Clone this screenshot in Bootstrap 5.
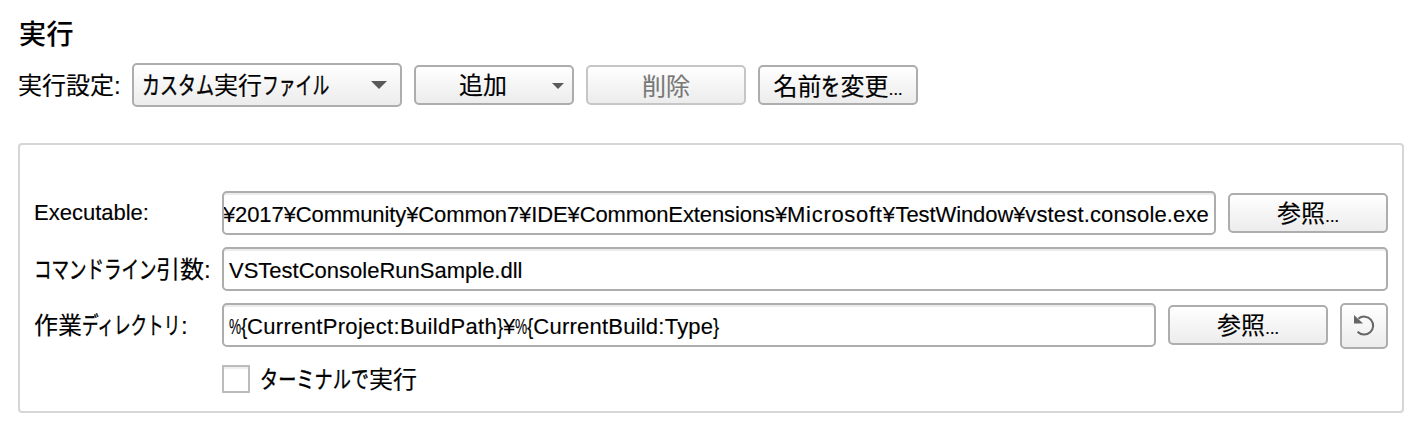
<!DOCTYPE html>
<html lang="ja">
<head>
<meta charset="utf-8">
<title>実行</title>
<link href="https://cdn.jsdelivr.net/npm/bootstrap@5.3.0/dist/css/bootstrap.min.css" rel="stylesheet">
<style>
body{background:#fff;color:#000;font:24px/30px "Liberation Sans","Noto Sans CJK JP",sans-serif;white-space:nowrap;-webkit-text-stroke:.15px}
.page{padding:18px 13px 0 18px}
h1{font:500 27px/30px "Noto Sans CJK JP",sans-serif;letter-spacing:.5px;margin:0;padding-left:1px}
.toolbar{height:44px;margin-top:15px;gap:12px}
.toolbar>.lbl{width:102px;padding-top:2px}
.lbl{flex-shrink:0}
.kana{display:inline-block;transform-origin:0 50%;font-family:"Noto Sans CJK JP",sans-serif;-webkit-text-stroke:.4px}
.k-custom{width:72px;transform:scaleX(.75)}
.k-file{width:67px;transform:scaleX(.7)}
.k-cmd{width:122px;transform:scaleX(.73)}
.k-dir{width:99px;transform:scaleX(.69)}
.k-term{width:109px;transform:scaleX(.757)}
.k-wo{width:19px;transform:scaleX(.8)}
.ui-btn{flex-shrink:0;width:160px;height:40px;border:2px solid #adadad;border-radius:5px;background:linear-gradient(#fff,#ececec);padding:3px 0 0;font-size:24px;line-height:30px;color:#000}
.ui-btn:disabled{border-color:#c6c6c6;color:#777;opacity:1}
.combo{width:270px;height:44px;padding:0 13px 0 8px}
.dots{font-family:"Liberation Sans",sans-serif;font-size:18px;letter-spacing:-.3px}
.add-btn{padding:2px 8px 0 43px}
.panel{border:2px solid #d6d6d6;border-radius:4px;height:270px;margin-top:36px;padding:46px 14px 0}
.fieldrow{height:44px;margin-bottom:12px;gap:12px}
.fieldrow>.lbl{width:176px}
.field{height:44px;min-width:0;border:2px solid #adadad;border-radius:5px;box-shadow:inset 0 2px #ececec;padding:7px 5px 0;overflow:hidden}
.lat{font-size:22px}
.t-path{letter-spacing:-.1px}
.t-ms{letter-spacing:.7px}
.t-win{letter-spacing:-.1px}
.t-exe{letter-spacing:.15px}
.t-var{letter-spacing:.33px}
.t-type{letter-spacing:.23px}
.pct{display:inline-block;width:12px;transform:scaleX(.62);transform-origin:0 50%}
.brace{display:inline-block;width:6px;transform:scaleX(.85);transform-origin:0 50%}
.box{width:28px;height:28px;border:2px solid #bcbcbc;box-shadow:inset 0 2px #eee}
.reset{width:48px;height:46px;padding:0}
.checkrow{padding-left:188px;gap:10px;height:30px;margin-top:17px}
</style>
</head>
<body>
<main class="page">
<h1>実行</h1>
<div class="toolbar d-flex align-items-center">
 <span class="lbl">実行設定:</span>
 <button class="btn ui-btn combo d-flex align-items-center"><span><span class="kana k-custom">カスタム</span>実行<span class="kana k-file">ファイル</span></span><svg class="ms-auto" width="16" height="8"><path d="M0 0H16L8 8Z" fill="#5a5a5a"/></svg></button>
 <button class="btn ui-btn add-btn d-flex align-items-center justify-content-between">追加<svg width="12" height="6"><path d="M0 0H12L6 6Z" fill="#5a5a5a"/></svg></button>
 <button class="btn ui-btn" disabled>削除</button>
 <button class="btn ui-btn">名前<span class="kana k-wo">を</span>変更<span class="dots">...</span></button>
</div>
<section class="panel">
 <div class="fieldrow d-flex align-items-center">
  <span class="lbl lat">Executable:</span>
  <div class="field lat flex-grow-1 d-flex justify-content-end"><span class="t-path">¥2017¥Community¥Common7¥IDE¥CommonExtensions¥</span><span class="t-ms">Microsoft¥</span><span class="t-win">TestWindow¥</span><span class="t-exe">vstest.console.exe</span></div>
  <button class="btn ui-btn">参照<span class="dots">...</span></button>
 </div>
 <div class="fieldrow d-flex align-items-center">
  <span class="lbl"><span class="kana k-cmd">コマンドライン</span>引数:</span>
  <div class="field lat flex-grow-1">VSTestConsoleRunSample.dll</div>
 </div>
 <div class="fieldrow d-flex align-items-center">
  <span class="lbl">作業<span class="kana k-dir">ディレクトリ</span>:</span>
  <div class="field lat flex-grow-1"><span class="pct">%</span><span class="brace">{</span><span class="t-var">CurrentProject:BuildPath</span><span class="brace">}</span>¥<span class="pct">%</span><span class="brace">{</span><span class="t-type">CurrentBuild:Type</span><span class="brace">}</span></div>
  <button class="btn ui-btn">参照<span class="dots">...</span></button>
  <button class="btn ui-btn reset align-self-start d-flex align-items-center justify-content-center" aria-label="Reset"><svg width="22" height="22" viewBox="0 0 22 22"><path d="M5.5 3.6A9 9 0 1 1 4.6 16.8" fill="none" stroke="#666" stroke-width="2"/><path d="M1 0V8.5H10Z" fill="#666"/></svg></button>
 </div>
 <div class="checkrow d-flex align-items-center"><span class="box"></span><span><span class="kana k-term">ターミナルで</span>実行</span></div>
</section>
</main>
<script src="https://cdn.jsdelivr.net/npm/bootstrap@5.3.0/dist/js/bootstrap.bundle.min.js"></script>
</body>
</html>
